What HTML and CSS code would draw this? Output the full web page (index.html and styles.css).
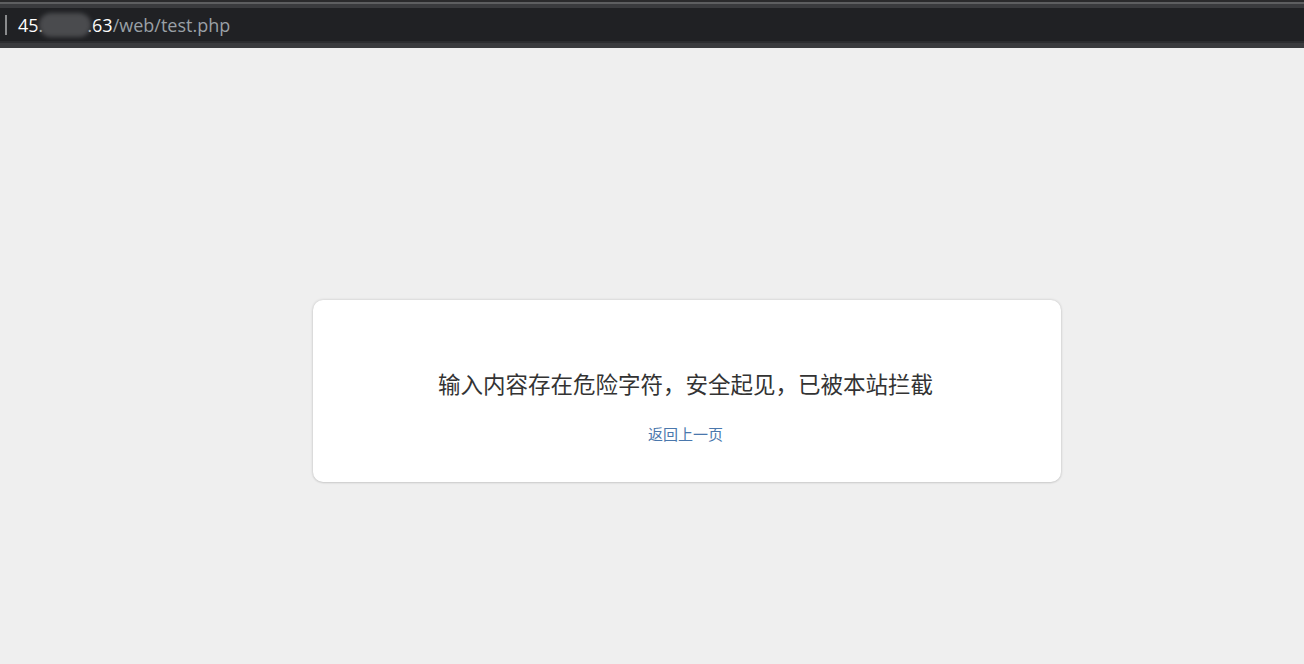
FILE: index.html
```html
<!DOCTYPE html>
<html lang="zh-CN">
<head>
<meta charset="utf-8">
<title>test.php</title>
<link rel="stylesheet" href="styles.css">
</head>
<body>
<div class="chrome">
  <div class="chrome-top"></div>
  <div class="chrome-bar">
    <span class="caret"></span>
    <span class="url"><span class="host">45.</span><span class="blur"></span><span class="host">.63</span><span class="path">/web/test.php</span></span>
  </div>
  <div class="chrome-bottom"></div>
</div>
<main class="page">
  <div class="card">
    <p class="msg">输入内容存在危险字符，安全起见，已被本站拦截</p>
    <a class="back" href="#">返回上一页</a>
  </div>
</main>
</body>
</html>
```

FILE: styles.css
```css
html, body {
  margin: 0;
  padding: 0;
  height: 100%;
}
body {
  background: #efefef;
  font-family: "Noto Sans CJK SC", "Liberation Sans", sans-serif;
  overflow: hidden;
}
.chrome {
  background: #202124;
}
.chrome-top {
  height: 8px;
  background: linear-gradient(to bottom, #2a2a2c 0, #2a2a2c 2px, #5e5f61 2px, #5e5f61 4px, #3a3b3e 4px, #3a3b3e 8px);
}
.chrome-bar {
  height: 33px;
  display: flex;
  align-items: center;
  background: #202124;
}
.chrome-bottom {
  height: 7px;
  background: linear-gradient(to bottom, #2c2d30 0, #2c2d30 2px, #3a3b3e 2px);
}
.caret {
  width: 2px;
  height: 20px;
  background: #8a8b8d;
  margin-left: 5px;
  margin-right: 11px;
}
.url {
  display: flex;
  align-items: center;
  font-family: "Open Sans", "Liberation Sans", sans-serif;
  font-size: 18px;
  color: #9aa0a6;
}
.host {
  color: #ffffff;
}
.blur {
  display: inline-block;
  width: 52px;
  height: 24px;
  border-radius: 12px;
  background: #4a4b4e;
  filter: blur(2px);
  margin: 0 -4px;
}
.path {
  color: #9aa0a6;
}
.page {
  display: flex;
  justify-content: center;
  padding-top: 252px;
  padding-left: 70px;
}
.card {
  width: 748px;
  height: 182px;
  box-sizing: border-box;
  background: #ffffff;
  border-radius: 10px;
  box-shadow: 0 0 3px rgba(0, 0, 0, 0.18), 0 1px 2px rgba(0, 0, 0, 0.08);
  display: flex;
  flex-direction: column;
  align-items: center;
  padding-top: 66px;
  padding-right: 3px;
}
.msg {
  margin: 0;
  font-size: 22.5px;
  line-height: 34px;
  color: #333333;
}
.back {
  margin-top: 24px;
  font-size: 15px;
  line-height: 20px;
  color: #4a77ac;
  text-decoration: none;
}
```
